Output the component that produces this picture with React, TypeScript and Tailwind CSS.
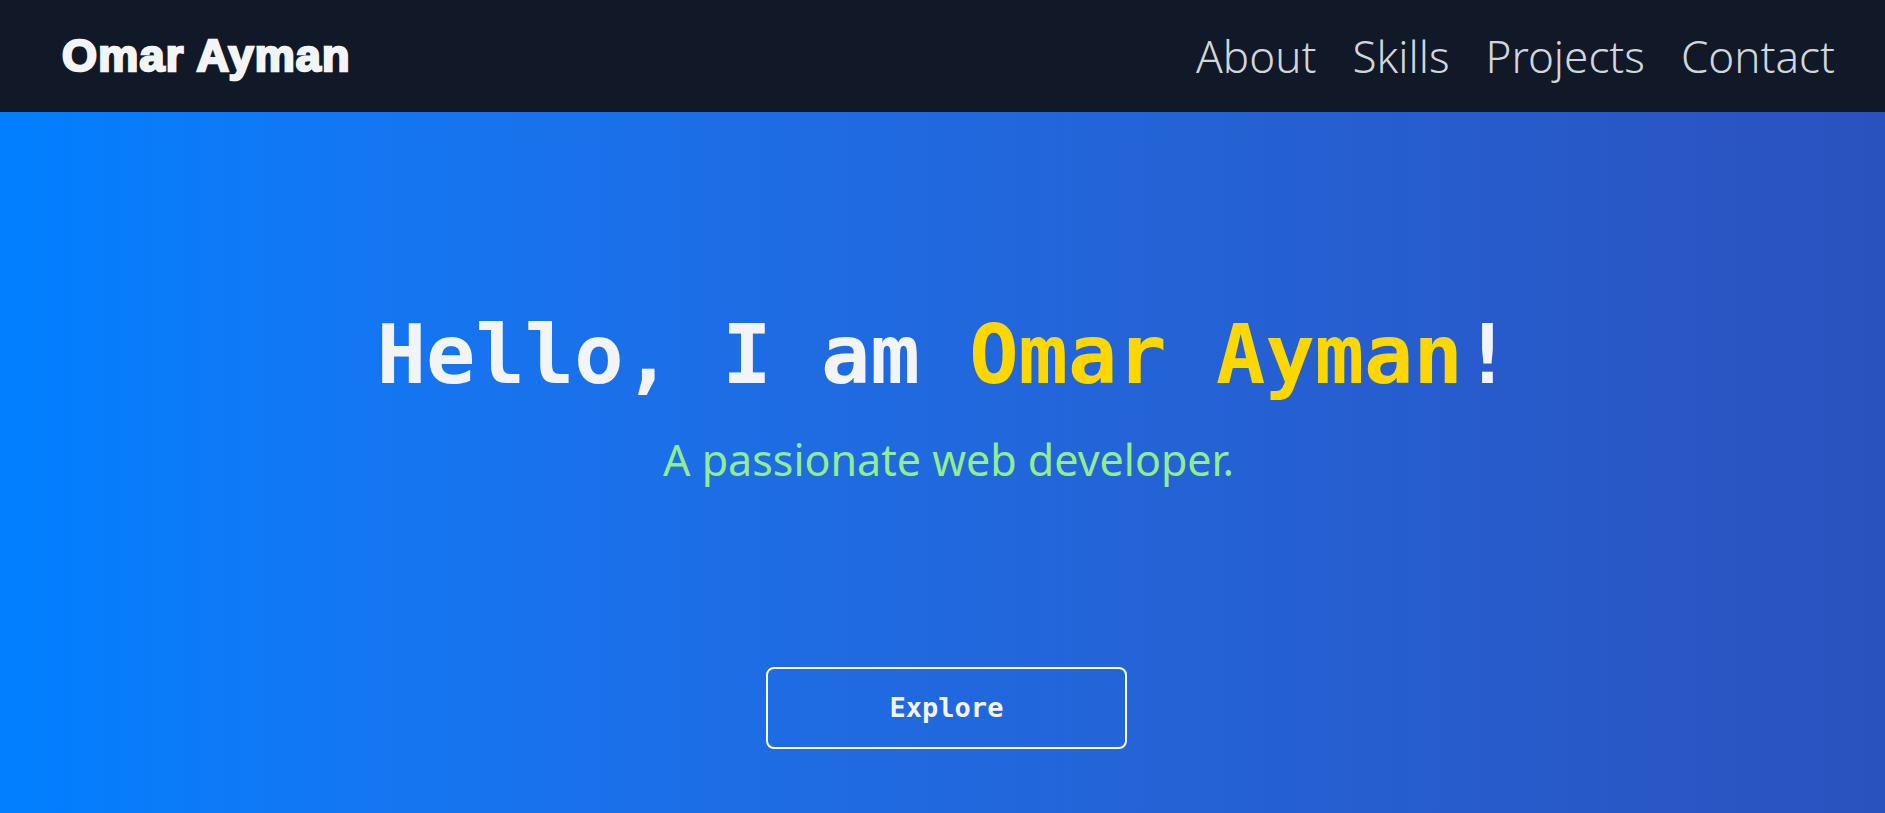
export default function App() {
  const links = ["About", "Skills", "Projects", "Contact"];
  return (
    <div className="min-h-screen bg-[#2a52be]">
      <header className="flex h-[112px] items-center justify-between bg-[#111827] pl-[62px] pr-[50px]">
        <div className="font-['Liberation_Sans',Arial,sans-serif] text-[45px] font-bold tracking-[1.2px] text-gray-100 [-webkit-text-stroke:2.5px_#f3f4f6]">
          Omar Ayman
        </div>
        <nav className="flex items-center gap-[36px] font-['Noto_Sans',sans-serif] text-[44px] font-light text-gray-300">
          {links.map((l) => (
            <a key={l} href={`#${l.toLowerCase()}`}>
              {l}
            </a>
          ))}
        </nav>
      </header>
      <section className="flex h-[701px] flex-col items-center bg-gradient-to-r from-[#007fff] to-[#2a52be]">
        <h1 className="ml-[4px] mt-[202px] font-['DejaVu_Sans_Mono',monospace] text-[82px] font-bold leading-none text-gray-100">
          Hello, I am <span className="text-[#ffd700]">Omar Ayman</span>!
        </h1>
        <p className="ml-[12px] mt-[42px] font-['Noto_Sans',sans-serif] text-[43px] font-normal leading-none text-[#90ee90]">
          A passionate web developer.
        </p>
        <button className="ml-[8px] mt-[186px] h-[82px] w-[361px] rounded-lg border-2 border-white font-['DejaVu_Sans_Mono',monospace] text-[27px] font-bold text-gray-100">
          Explore
        </button>
      </section>
    </div>
  );
}
